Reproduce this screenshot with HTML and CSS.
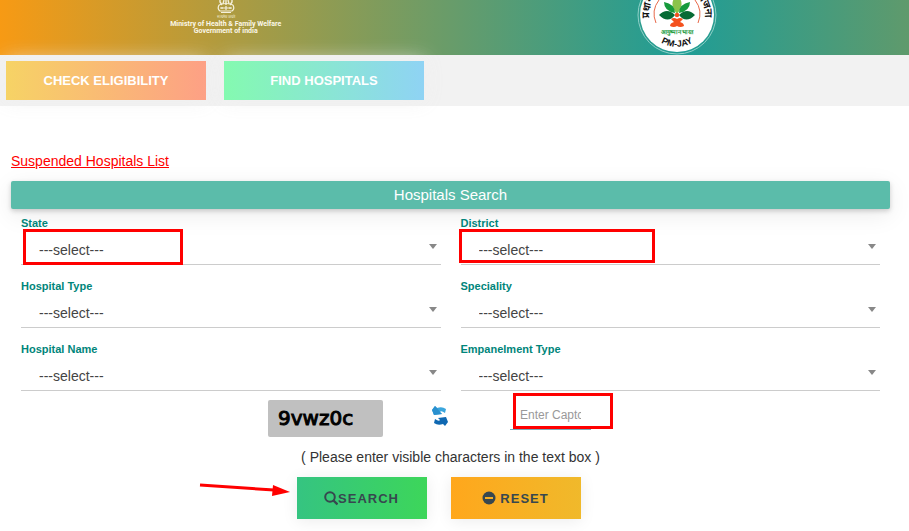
FILE: index.html
```
<!DOCTYPE html>
<html lang="en">
<head>
    <meta charset="UTF-8">
    <meta name="viewport" content="width=device-width, initial-scale=1.0">
    <title>Find Hospitals</title>
    <link rel="stylesheet" href="styles.css">
</head>
<body>
<header class="header">
    <div class="ministry">
        <svg class="emblem" width="30" height="21" viewBox="0 0 30 21" fill="none" stroke="#f4f0dc">
            <path d="M9 0v2l2 3M13 0l-1 4M17 0l1 4M21 0v2l-2 3M15 0v5" stroke-width="1.4"/>
            <path d="M8 5q7-3 14 0M8 5q-2 4 1 6h12q3-2 1-6M9 8h12" stroke-width="1.2"/>
            <path d="M11 7v2M15 6v4M19 7v2M10 12.500h10" stroke-width="1.2"/>
            <text x="15" y="18" text-anchor="middle" class="emblem-text">सत्यमेव जयते</text>
        </svg>
        <div class="ministry-name">Ministry of Health &amp; Family Welfare<br>Government of india</div>
    </div>
    <div class="scheme">
        <svg width="80" height="55" viewBox="0 0 80 55">
            <defs>
                <path id="leftArc" d="M12 18A28 28 0 0 1 26 -9"/>
                <path id="rightArc" d="M54 -9A28 28 0 0 1 68 18"/>
                <path id="bottomArc" d="M17 37A32 32 0 0 0 63 37"/>
            </defs>
            <circle cx="40" cy="15" r="39" fill="none" stroke="#8fd0c8" stroke-width="1"/>
            <circle cx="40" cy="15" r="37" fill="#fff"/>
            <path d="M19 23A23 23 0 0 1 22 0M61 23A23 23 0 0 0 58 0" fill="none" stroke="#e8694a" stroke-width="1"/>
            <path d="M40 14Q32 5 38-3h4Q48 5 40 14Z" fill="#8bc34a"/>
            <path d="M38 13Q27 11 27 2Q38 4 38 13ZM42 13Q53 11 53 2Q42 4 42 13Z" fill="#169a3c"/>
            <path d="M38 15Q30 7 22 15Q31 24 38 15ZM42 15Q50 7 58 15Q49 24 42 15Z" fill="#076b35"/>
            <circle cx="40" cy="15" r="2.200" fill="#f4511e"/>
            <path d="M34 19q3-2 6 0q3-2 6 0l-3 3q4 1 4 4q-4 2-7 0q-3 2-7 0q0-3 4-4Z" fill="#f4511e"/>
            <text x="40" y="34" text-anchor="middle" class="scheme-hindi">आयुष्मान भारत</text>
            <text class="scheme-ring"><textPath href="#leftArc">प्रधान</textPath></text>
            <text class="scheme-ring" text-anchor="end"><textPath href="#rightArc" startOffset="100%">योजना</textPath></text>
            <text class="scheme-name" text-anchor="middle"><textPath href="#bottomArc" startOffset="50%">PM-JAY</textPath></text>
        </svg>
    </div>
</header>

<nav class="nav">
    <button class="nav-button eligibility" type="button">CHECK ELIGIBILITY</button>
    <button class="nav-button hospitals" type="button">FIND HOSPITALS</button>
</nav>

<main class="content">
    <a class="suspended" href="#">Suspended Hospitals List</a>
    <form class="search">
        <h1 class="search-title">Hospitals Search</h1>
        <div class="fields">
            <div class="field">
                <label for="state">State</label>
                <div class="select-box">
                    <select id="state"><option>---select---</option></select>
                    <span class="mark mark-state"></span>
                </div>
            </div>
            <div class="field">
                <label for="district">District</label>
                <div class="select-box">
                    <select id="district"><option>---select---</option></select>
                    <span class="mark mark-district"></span>
                </div>
            </div>
            <div class="field">
                <label for="type">Hospital Type</label>
                <div class="select-box">
                    <select id="type"><option>---select---</option></select>
                </div>
            </div>
            <div class="field">
                <label for="speciality">Speciality</label>
                <div class="select-box">
                    <select id="speciality"><option>---select---</option></select>
                </div>
            </div>
            <div class="field">
                <label for="name">Hospital Name</label>
                <div class="select-box">
                    <select id="name"><option>---select---</option></select>
                </div>
            </div>
            <div class="field">
                <label for="empanelment">Empanelment Type</label>
                <div class="select-box">
                    <select id="empanelment"><option>---select---</option></select>
                </div>
            </div>
        </div>

        <div class="captcha">
            <div class="captcha-code">9vwz0c</div>
            <button class="refresh" type="button" aria-label="Refresh">
                <svg width="18" height="22" viewBox="0 0 18 22">
                    <path d="M4 1L6 3Q11 1 15 4L14 8Q10 5 9 7L11 9L3 10L1 5Z" fill="#3ba6dd"/>
                    <path d="M4 1L6 3L9 7L11 9L3 10L1 5Z" fill="#2a90cf"/>
                    <path d="M14 21L12 19Q7 21 3 18L4 14Q8 17 9 15L7 13L15 12L17 17Z" fill="#0f68b2"/>
                </svg>
            </button>
            <div class="captcha-input">
                <input type="text" placeholder="Enter Captcha" aria-label="Enter Captcha">
                <span class="mark mark-captcha"></span>
            </div>
        </div>
        <p class="note">( Please enter visible characters in the text box )</p>

        <div class="actions">
            <button class="action find" type="button">
                <svg width="14" height="15" viewBox="0 0 14 15" fill="none" stroke="#37474f">
                    <circle cx="6" cy="6" r="4.800" stroke-width="2"/>
                    <path d="M9.500 9.500L13.500 13.500" stroke-width="2.400"/>
                </svg>SEARCH
            </button>
            <button class="action reset" type="reset">
                <svg width="14" height="14" viewBox="0 0 14 14">
                    <circle cx="7" cy="7" r="6.500" fill="#37474f"/>
                    <path d="M3 7h8" stroke="#f7ae22" stroke-width="2"/>
                </svg>
                <span>RESET</span>
            </button>
            <svg class="pointer" width="92" height="16" viewBox="0 0 92 16">
                <path d="M1 4L75 9" stroke="#f00" stroke-width="3" fill="none"/>
                <path d="M74 4L91 11L73 15Z" fill="#f00"/>
            </svg>
        </div>
    </form>
</main>
</body>
</html>
```
FILE: styles.css
```
* {
    box-sizing: border-box;
}

body {
    margin: 0;
    background-color: #fff;
    color: #333;
    font-family: "Liberation Sans", Arial, sans-serif;
    font-size: 14px;
    line-height: 16px;
}

button,
input,
select {
    font-family: inherit;
}

svg {
    display: block;
}

/* Header */
.header {
    display: flex;
    background: linear-gradient(to right, #f79a14 0%, #1f9d96 75%, #5f9a6c 100%);
}

.ministry,
.scheme {
    flex: 1;
    display: flex;
    flex-direction: column;
    align-items: center;
}

.scheme {
    padding-right: 6px;
}

.ministry-name {
    color: #fbf7e6;
    font-family: Roboto, "Liberation Sans", sans-serif;
    font-size: 7px;
    font-weight: bold;
    line-height: 7px;
    text-align: center;
}

.emblem-text {
    fill: #f4f0dc;
    stroke: none;
    font-size: 4px;
}

.scheme-hindi {
    fill: #169a3c;
    font-size: 6px;
    font-weight: bold;
}

.scheme-ring {
    fill: #111;
    font-size: 10px;
    font-weight: bold;
}

.scheme-name {
    fill: #111;
    font-size: 9px;
    font-weight: bold;
}

/* Top buttons */
.nav {
    display: flex;
    gap: 18px;
    padding: 6px;
    background-color: #f2f2f2;
}

.nav-button {
    width: 200px;
    height: 39px;
    border: none;
    color: #fff;
    font-size: 13px;
    font-weight: bold;
    cursor: pointer;
    box-shadow: 0 0 20px rgba(238, 238, 238, 0.9);
}

.eligibility {
    background: linear-gradient(to right, #f6d365, #fda085);
}

.hospitals {
    background: linear-gradient(to right, #84fab0, #8fd3f4);
}

/* Search form */
.content {
    padding: 47px 19px 12px 11px;
}

.suspended {
    color: #f00;
}

.search-title {
    margin: 12px 0 7px;
    border-radius: 2px;
    background-color: #5bbcaa;
    color: #fff;
    font-size: 15px;
    font-weight: normal;
    line-height: 28px;
    text-align: center;
    box-shadow: 0 2px 5px rgba(0, 0, 0, 0.18), 0 6px 24px rgba(0, 0, 0, 0.08);
}

.fields {
    display: grid;
    grid-template-columns: 1fr 1fr;
    gap: 14px 20px;
    padding: 0 10px;
}

.field label {
    display: block;
    color: #00857a;
    font-size: 11px;
    font-weight: bold;
    line-height: 14px;
}

.select-box {
    position: relative;
}

.select-box select {
    display: block;
    width: 100%;
    height: 35px;
    padding: 6px 18px 0;
    border: none;
    border-bottom: 1px solid #ccc;
    background: none;
    color: #444;
    font-size: 14px;
    appearance: none;
}

.select-box::after {
    content: "";
    position: absolute;
    top: 14px;
    right: 4px;
    border: 4px solid transparent;
    border-top: 5px solid #888;
    border-bottom: none;
}

.captcha {
    display: flex;
    gap: 48px;
    justify-content: center;
    align-items: flex-start;
    padding: 9px 42px 0 0;
}

.captcha-code {
    width: 115px;
    padding-left: 10px;
    border-radius: 2px;
    background-color: #c0c0c0;
    color: #000;
    font-family: "DejaVu Sans", Verdana, sans-serif;
    font-size: 20px;
    line-height: 37px;
    -webkit-text-stroke: 1px #000;
}

.refresh {
    width: 31px;
    padding: 5px 0 0;
    border: none;
    background: none;
    cursor: pointer;
}

.captcha-input {
    position: relative;
}

.captcha-input input {
    display: block;
    width: 81px;
    height: 30px;
    padding: 0 10px;
    border: none;
    border-bottom: 1px solid #78aebd;
    font-size: 12px;
}

.captcha-input input::placeholder {
    color: #999;
}

.note {
    margin: 12px 0;
    text-align: center;
}

.actions {
    position: relative;
    display: flex;
    justify-content: center;
}

.action {
    display: flex;
    align-items: center;
    justify-content: center;
    width: 130px;
    height: 42px;
    margin-right: 24px;
    padding: 0;
    border: none;
    color: #37474f;
    font-size: 13px;
    font-weight: bold;
    letter-spacing: 1px;
    cursor: pointer;
    box-shadow: 0 2px 16px rgba(0, 0, 0, 0.08);
}

.find {
    background: linear-gradient(to right, #35c481, #3dd65a);
}

.reset {
    gap: 4px;
    background: linear-gradient(to right, #ffa71c, #f0b92b);
}

/* Red callouts */
.mark {
    position: absolute;
    border: 3px solid #f00;
    pointer-events: none;
}

.mark-state {
    top: -1px;
    left: 2px;
    width: 160px;
    height: 36px;
}

.mark-district {
    top: -1px;
    left: -2px;
    width: 196px;
    height: 34px;
}

.mark-captcha {
    top: -7px;
    left: 3px;
    width: 100px;
    height: 36px;
}

.pointer {
    position: absolute;
    top: 4px;
    right: calc(50% + 160px);
}
```
